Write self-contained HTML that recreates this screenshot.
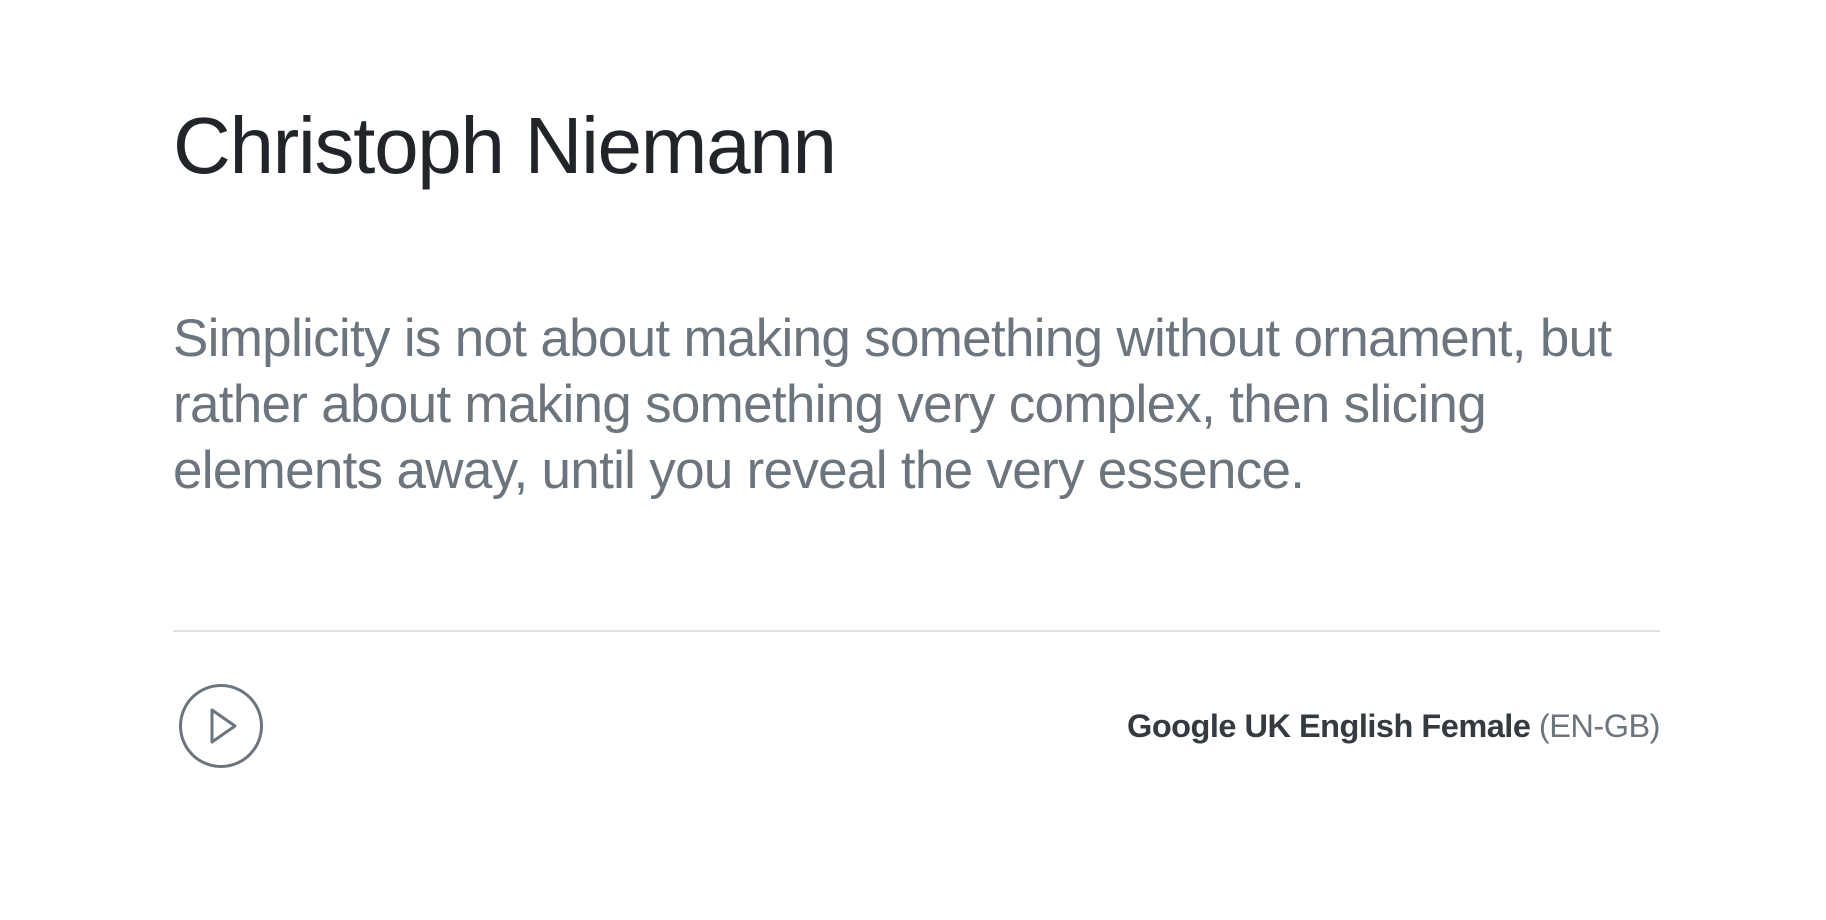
<!DOCTYPE html>
<html><head><style>
body{margin:0;background:#fff;width:1826px;height:920px;overflow:hidden;font-family:"Liberation Sans",sans-serif;}
h1{position:absolute;left:173px;top:98px;margin:0;font-size:80px;font-weight:normal;color:#212529;letter-spacing:-1.3px;line-height:96px;}
p{position:absolute;left:173px;top:306px;width:1470px;margin:0;font-size:53px;line-height:66px;color:#6c757d;letter-spacing:-0.7px;}
.hr{position:absolute;left:173px;top:630px;width:1487px;height:2px;background:#dee2e6;}
.v{position:absolute;right:166px;top:708px;font-size:32.5px;color:#343a40;letter-spacing:-0.5px;}
.v b{font-weight:bold;}
.v span{color:#6c757d;}
svg{position:absolute;left:178px;top:683px;}
</style></head><body>
<h1>Christoph Niemann</h1>
<p>Simplicity is not about making something without ornament, but rather about making something very complex, then slicing elements away, until you reveal the very essence.</p>
<div class="hr"></div>
<svg width="86" height="86" viewBox="0 0 86 86"><circle cx="43" cy="43" r="40.5" fill="none" stroke="#6c757d" stroke-width="3"/><path d="M34 27 L34 59 L57 43 Z" fill="none" stroke="#6c757d" stroke-width="3" stroke-linejoin="round"/></svg>
<div class="v"><b>Google UK English Female</b> <span>(EN-GB)</span></div>
</body></html>
